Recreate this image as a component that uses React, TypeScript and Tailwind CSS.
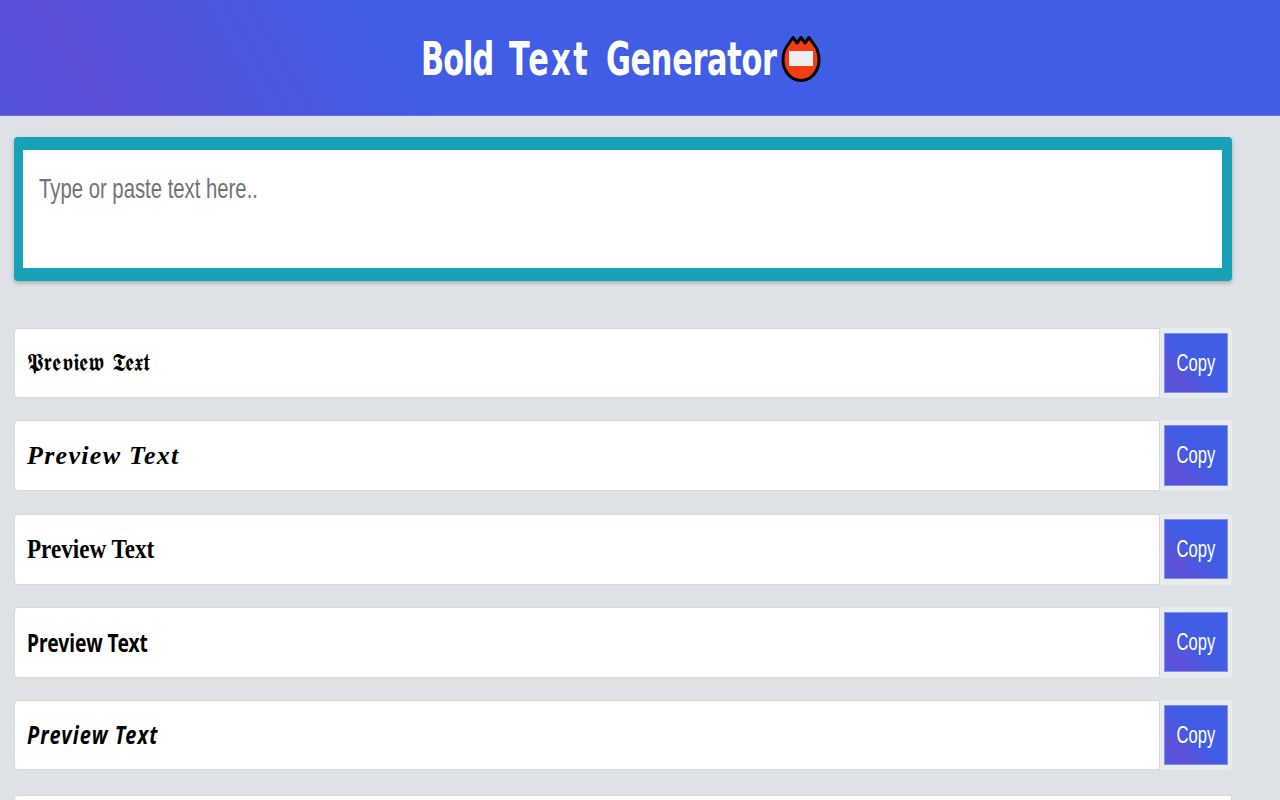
function Row({ children, h, mb, bt, bh }: { children?: React.ReactNode; h: string; mb: string; bt?: boolean; bh?: string }) {
  return (
    <div className={`flex ${h} ${mb}`}>
      <div className="flex-1 flex items-center bg-white border border-[#d5d9de] rounded-l-[4px] pl-[12px] text-black whitespace-nowrap">
        {children}
      </div>
      {bt && (
        <div className="w-[72px] bg-[#e9ecef] rounded-r-[4px] flex items-start justify-center pt-[5px]">
          <button className={`w-[64px] ${bh} border border-[#7f8ff0] bg-[linear-gradient(45deg,#4a58e2_0%,#5f50d6_18%,#405de6_50%,#405de6_100%)] text-white text-[23px] flex items-center justify-center`}>
            <span className="scale-x-[0.72]">Copy</span>
          </button>
        </div>
      )}
    </div>
  );
}

export default function App() {
  return (
    <div className="h-[800px] overflow-hidden bg-[#dee2e6] font-['Liberation_Sans',sans-serif]">
      <header className="h-[116px] flex items-center pl-[421px] border-b border-[#6b6be8] bg-[linear-gradient(60deg,#5452dc_0%,#5b4fd7_8%,#405de6_32%,#405de6_100%)]">
        <div className="flex items-center">
          <h1 className="mt-[4px] text-white text-[46px] font-bold font-['DejaVu_Sans',sans-serif] [word-spacing:8px] w-[357px] whitespace-nowrap origin-left scale-x-[0.66]">
            <span className="tracking-[-1.5px]">Bold</span> <span className="tracking-[3.7px]">Text</span> <span className="tracking-[-0.5px]">Generator</span>
          </h1>
          <svg width="43" height="48" viewBox="0 0 43 48" className="mt-[3px]">
            <path
              d="M23 45.5C12 45.5 5 35 5 25C5 19 7 14 9 11L15 2.5L19 8L23 2.5L27 8L31 2.5L37 11C39 14 41 19 41 25C41 35 34 45.5 23 45.5Z"
              fill="#f23c14"
              stroke="#000"
              strokeWidth="3"
              strokeLinejoin="round"
            />
            <rect x="11" y="16" width="24" height="15" fill="#eeeeee" />
          </svg>
        </div>
      </header>
      <main className="pl-[14px] w-[1232px]">
        <div className="mt-[21px] h-[144px] bg-white border-solid border-[#17a2b8] border-l-[9px] border-r-[10px] border-y-[13px] rounded-[4px] shadow-[0_2px_4px_rgba(0,0,0,0.25)] px-[16px] pt-[22px]">
          <div className="text-[#6c757d] text-[28px] leading-[34px] origin-left scale-x-[0.725] whitespace-nowrap">Type or paste text here..</div>
        </div>
        <div className="mt-[47px]">
          <Row h="h-[70px]" mb="mb-[22px]" bt bh="h-[60px]">
            <span className="text-[25px] font-['DejaVu_Serif',serif] origin-left scale-x-[0.91]">𝕻𝖗𝖊𝖛𝖎𝖊𝖜 𝕿𝖊𝖝𝖙</span>
          </Row>
          <Row h="h-[71px]" mb="mb-[23px]" bt bh="h-[61px]">
            <span className="text-[26px] font-bold italic tracking-[1.3px] font-['Liberation_Serif',serif]">Preview Text</span>
          </Row>
          <Row h="h-[71px]" mb="mb-[22px]" bt bh="h-[60px]">
            <span className="text-[27px] font-bold font-['Liberation_Serif',serif] origin-left scale-x-[0.855]">Preview Text</span>
          </Row>
          <Row h="h-[71px]" mb="mb-[22px]" bt bh="h-[60px]">
            <span className="text-[25px] font-bold font-['Noto_Sans',sans-serif] origin-left scale-x-[0.77]">Preview Text</span>
          </Row>
          <Row h="h-[70px]" mb="mb-[25px]" bt bh="h-[60px]">
            <span className="text-[25px] font-bold italic tracking-[1.4px] font-['Noto_Sans',sans-serif] origin-left scale-x-[0.8]">Preview Text</span>
          </Row>
          <Row h="h-[71px]" mb="" />
        </div>
      </main>
    </div>
  );
}
